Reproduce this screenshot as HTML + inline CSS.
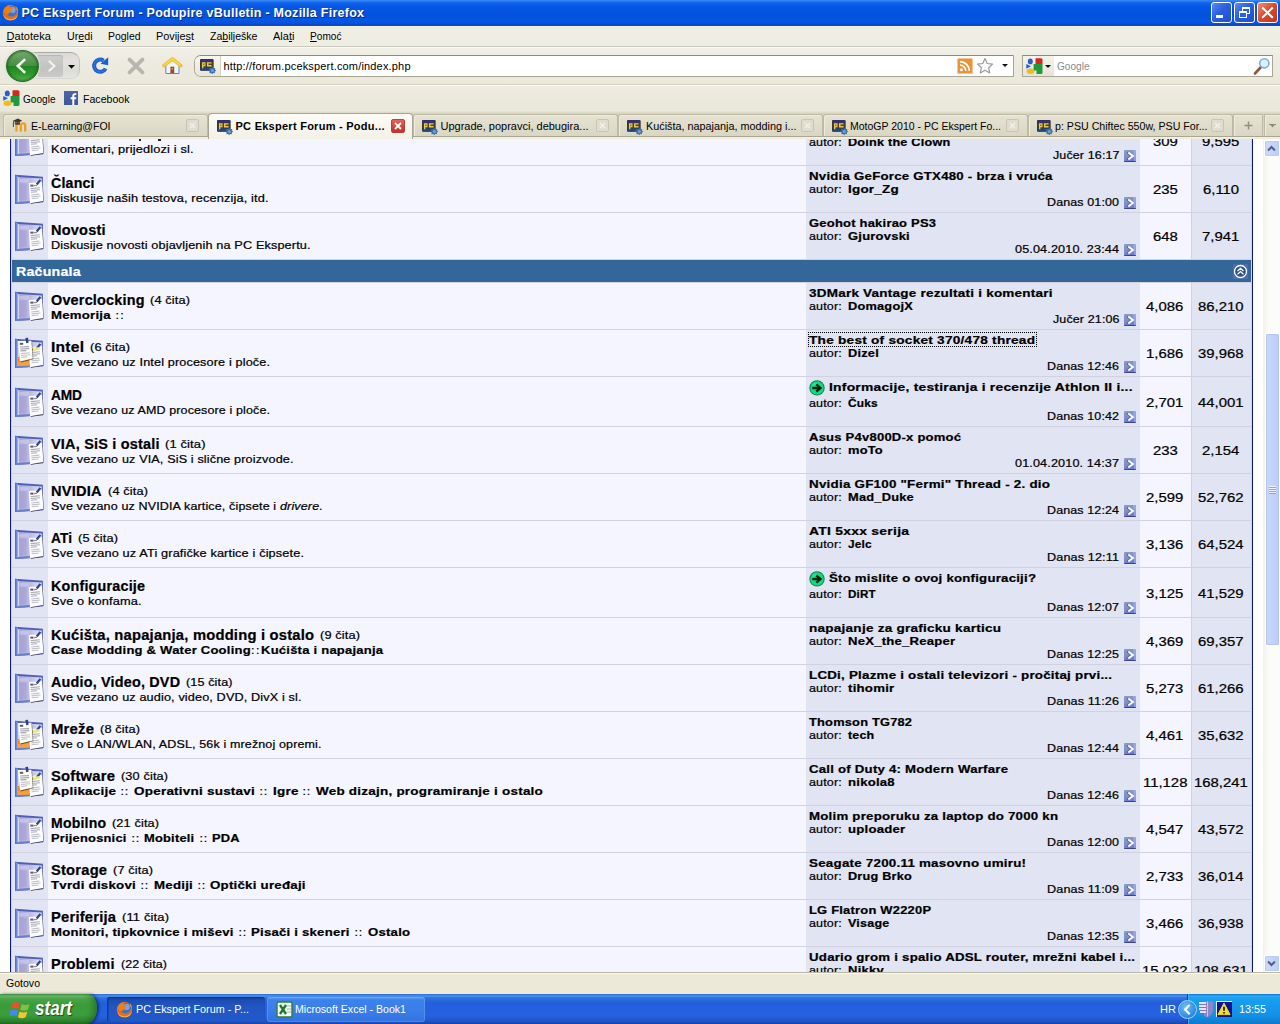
<!DOCTYPE html>
<html><head><meta charset="utf-8"><title>PC Ekspert Forum - Podupire vBulletin - Mozilla Firefox</title>
<style>
html,body{margin:0;padding:0;background:#fff;}
body{width:1280px;height:1024px;overflow:hidden;font-family:"Liberation Sans",sans-serif;}
#scr{position:relative;width:1280px;height:1024px;overflow:hidden;background:#fff;}
#scr div,#scr span,#scr svg{position:absolute;box-sizing:border-box;}
.t{white-space:pre;color:#000;transform-origin:0 0;}
.t b{position:static!important;font-weight:700;}
.t i{position:static!important;}
#vp{left:0;top:139px;width:1263px;height:833px;overflow:hidden;background:#fff;}
#pg{left:0;top:-139px;width:1280px;height:1024px;}
#pg .t{-webkit-text-stroke:0.22px currentColor;}

</style></head>
<body>
<div id="scr">
<div id="vp"><div id="pg">
<div style="left:0;top:139px;width:1263px;height:833px;background:#fff;"></div>
<div id="tb" style="left:10px;top:139px;width:1243px;height:833px;background:#d1d1e1;border-left:1px solid #0b198c;border-right:1px solid #0b198c;"></div>
<svg style="left:0;top:0" width="0" height="0"><defs>
<linearGradient id="gi" x1="0" x2="1" y1="0" y2="0"><stop offset="0" stop-color="#a9a8d8"/><stop offset=".55" stop-color="#bdbee6"/><stop offset="1" stop-color="#dfe2fa"/></linearGradient>
<linearGradient id="gl" x1="0" x2="1" y1="0" y2="0"><stop offset="0" stop-color="#5166c0"/><stop offset=".6" stop-color="#6f8be0"/><stop offset="1" stop-color="#90a8ee"/></linearGradient>
<g id="frame"><path d="M1 .8L28.900 2.800V28.300L1 29.900z" fill="#5060b4"/><path d="M1 .8L4 2V28.700L1 29.900z" fill="url(#gl)"/><path d="M3.900 3.100L27.700 4.500V26.700L3.900 28.100z" fill="url(#gi)"/><path d="M4.300 3.200V28" stroke="#e4e8fb" stroke-width=".9"/><path d="M5.500 5h9.500v3.500H5.500z" fill="#c9cbec" opacity=".7"/><path d="M5.500 9.500h7V26h-7z" fill="#a29fcf" opacity=".55"/><path d="M1 29.900L28.900 28.300V27L3.900 28.100z" fill="#6a7ed0"/></g>
<g id="paper"><path d="M15.600 10.300L28.700 9.200L29.900 27.600L16.800 30z" fill="#20202a" opacity=".75"/><path d="M14.800 8.900L28.200 8.200L29.400 26.900L16 29.200z" fill="#fdfdff"/><path d="M16.300 10.600h3.200v2h-3.200z" fill="#5a5c6c"/><path d="M20 11.600l3-.3" stroke="#8a8c9c" stroke-width="1.200"/><path d="M16.600 14.600l9.200-.8M16.800 16.500l9.200-.8M17 18.300l6-.6" stroke="#a9abb9" stroke-width="1.100"/><path d="M17.300 21l8-.9M17.500 22.900l9-.9M17.700 24.800l7-.8" stroke="#c0c2cc" stroke-width="1.100"/><path d="M21.800 9.800L25.600 5.200l1.600 1.300L23.600 11.300z" fill="#2f3f92"/></g>
<g id="paper2"><path d="M4.600 3.700L18 3.500L19.400 21.200L6.600 24.400z" fill="#30281c" opacity=".6"/><path d="M4 3L17.400 2.800L18.700 20.400L6 23.400z" fill="#fffff4"/><path d="M5.800 4.800h3.400v2H5.800z" fill="#5a5c6c"/><path d="M6 9l9-.4M6.200 11l9-.4M6.400 12.900l6-.3" stroke="#9fa1b4" stroke-width="1.100"/><path d="M6.800 15.600l9-.8M7 17.500l9-.8M7.200 19.400l6-.6" stroke="#c3c0d6" stroke-width="1.100"/><path d="M11.300 0l2.700-.3.600 5-2.400.6z" fill="#2f3f92"/></g>
</defs></svg>
<svg style="left:0;top:0" width="0" height="0"><defs><linearGradient id="ga" x1="0" x2=".35" y1="0" y2="1"><stop offset="0" stop-color="#8c9cba"/><stop offset=".5" stop-color="#8090cc"/><stop offset="1" stop-color="#6b78d4"/></linearGradient>
<g id="la"><rect x="0" y="0" width="12" height="12" rx="1" fill="url(#ga)"/><path d="M9 0h3v11H10z" fill="#a8b8f4" opacity=".55"/><path d="M.3 11.500h11.400" stroke="#3d4488" stroke-width="1"/><path d="M3.300 2.500L7.600 6L3.300 9.500" stroke="#45527e" stroke-width="2.200" fill="none" opacity=".8"/><path d="M4.300 2.500L8.800 6L4.300 9.500" stroke="#fff" stroke-width="2" fill="none"/></g></defs></svg>
<div style="left:12px;top:116px;width:36px;height:49px;background:#e1e4f2;"></div>
<div style="left:48px;top:116px;width:758px;height:49px;background:#f5f5ff;"></div>
<div style="left:806px;top:116px;width:334px;height:49px;background:#e1e4f2;"></div>
<div style="left:1140px;top:116px;width:51px;height:49px;background:#f5f5ff;"></div>
<div style="left:1192px;top:116px;width:59px;height:49px;background:#e1e4f2;"></div>
<svg style="left:14px;top:126px" width="31" height="31" viewBox="0 0 31 31"><use href="#frame"/><use href="#paper"/></svg>
<svg style="left:809px;top:119px" width="16" height="16" viewBox="0 0 16 16"><circle cx="8" cy="7.900" r="7.700" fill="#0c8448"/><circle cx="8" cy="7.900" r="6.700" fill="#17d686"/><circle cx="6.500" cy="6" r="3.500" fill="#22f39c" opacity=".55"/><path d="M3.200 8h8M7.300 4.400L11.400 8l-4.100 3.600" stroke="#04260e" stroke-width="2.400" fill="none"/></svg>
<svg style="left:1124px;top:150px" width="12" height="12" viewBox="0 0 12 12"><use href="#la"/></svg>
<div style="left:12px;top:166px;width:36px;height:46px;background:#e1e4f2;"></div>
<div style="left:48px;top:166px;width:758px;height:46px;background:#f5f5ff;"></div>
<div style="left:806px;top:166px;width:334px;height:46px;background:#e1e4f2;"></div>
<div style="left:1140px;top:166px;width:51px;height:46px;background:#f5f5ff;"></div>
<div style="left:1192px;top:166px;width:59px;height:46px;background:#e1e4f2;"></div>
<svg style="left:14px;top:174px" width="31" height="31" viewBox="0 0 31 31"><use href="#frame"/><use href="#paper"/></svg>
<svg style="left:1124px;top:197px" width="12" height="12" viewBox="0 0 12 12"><use href="#la"/></svg>
<div style="left:12px;top:213px;width:36px;height:46px;background:#e1e4f2;"></div>
<div style="left:48px;top:213px;width:758px;height:46px;background:#f5f5ff;"></div>
<div style="left:806px;top:213px;width:334px;height:46px;background:#e1e4f2;"></div>
<div style="left:1140px;top:213px;width:51px;height:46px;background:#f5f5ff;"></div>
<div style="left:1192px;top:213px;width:59px;height:46px;background:#e1e4f2;"></div>
<svg style="left:14px;top:221px" width="31" height="31" viewBox="0 0 31 31"><use href="#frame"/><use href="#paper"/></svg>
<svg style="left:1124px;top:244px" width="12" height="12" viewBox="0 0 12 12"><use href="#la"/></svg>
<div style="left:12px;top:283px;width:36px;height:46px;background:#e1e4f2;"></div>
<div style="left:48px;top:283px;width:758px;height:46px;background:#f5f5ff;"></div>
<div style="left:806px;top:283px;width:334px;height:46px;background:#e1e4f2;"></div>
<div style="left:1140px;top:283px;width:51px;height:46px;background:#f5f5ff;"></div>
<div style="left:1192px;top:283px;width:59px;height:46px;background:#e1e4f2;"></div>
<svg style="left:14px;top:291px" width="31" height="31" viewBox="0 0 31 31"><use href="#frame"/><use href="#paper"/></svg>
<svg style="left:1124px;top:314px" width="12" height="12" viewBox="0 0 12 12"><use href="#la"/></svg>
<div style="left:12px;top:330px;width:36px;height:46px;background:#e1e4f2;"></div>
<div style="left:48px;top:330px;width:758px;height:46px;background:#f5f5ff;"></div>
<div style="left:806px;top:330px;width:334px;height:46px;background:#e1e4f2;"></div>
<div style="left:1140px;top:330px;width:51px;height:46px;background:#f5f5ff;"></div>
<div style="left:1192px;top:330px;width:59px;height:46px;background:#e1e4f2;"></div>
<svg style="left:14px;top:338px" width="31" height="31" viewBox="0 0 31 31" overflow="visible"><use href="#frame"/><path d="M4 19L15.500 19V27.400L4 28.100z" fill="#f08a22"/><path d="M4 24L15.500 23.500V27.400L4 28.100z" fill="#f5a040"/><use href="#paper"/><path d="M18.200 9.500l8-.6.2 3-8 .8z" fill="#eef07a" opacity=".9"/><use href="#paper2"/></svg>
<svg style="left:1124px;top:361px" width="12" height="12" viewBox="0 0 12 12"><use href="#la"/></svg>
<div style="left:12px;top:377px;width:36px;height:49px;background:#e1e4f2;"></div>
<div style="left:48px;top:377px;width:758px;height:49px;background:#f5f5ff;"></div>
<div style="left:806px;top:377px;width:334px;height:49px;background:#e1e4f2;"></div>
<div style="left:1140px;top:377px;width:51px;height:49px;background:#f5f5ff;"></div>
<div style="left:1192px;top:377px;width:59px;height:49px;background:#e1e4f2;"></div>
<svg style="left:14px;top:387px" width="31" height="31" viewBox="0 0 31 31"><use href="#frame"/><use href="#paper"/></svg>
<svg style="left:809px;top:380px" width="16" height="16" viewBox="0 0 16 16"><circle cx="8" cy="7.900" r="7.700" fill="#0c8448"/><circle cx="8" cy="7.900" r="6.700" fill="#17d686"/><circle cx="6.500" cy="6" r="3.500" fill="#22f39c" opacity=".55"/><path d="M3.200 8h8M7.300 4.400L11.400 8l-4.100 3.600" stroke="#04260e" stroke-width="2.400" fill="none"/></svg>
<svg style="left:1124px;top:411px" width="12" height="12" viewBox="0 0 12 12"><use href="#la"/></svg>
<div style="left:12px;top:427px;width:36px;height:46px;background:#e1e4f2;"></div>
<div style="left:48px;top:427px;width:758px;height:46px;background:#f5f5ff;"></div>
<div style="left:806px;top:427px;width:334px;height:46px;background:#e1e4f2;"></div>
<div style="left:1140px;top:427px;width:51px;height:46px;background:#f5f5ff;"></div>
<div style="left:1192px;top:427px;width:59px;height:46px;background:#e1e4f2;"></div>
<svg style="left:14px;top:435px" width="31" height="31" viewBox="0 0 31 31"><use href="#frame"/><use href="#paper"/></svg>
<svg style="left:1124px;top:458px" width="12" height="12" viewBox="0 0 12 12"><use href="#la"/></svg>
<div style="left:12px;top:474px;width:36px;height:46px;background:#e1e4f2;"></div>
<div style="left:48px;top:474px;width:758px;height:46px;background:#f5f5ff;"></div>
<div style="left:806px;top:474px;width:334px;height:46px;background:#e1e4f2;"></div>
<div style="left:1140px;top:474px;width:51px;height:46px;background:#f5f5ff;"></div>
<div style="left:1192px;top:474px;width:59px;height:46px;background:#e1e4f2;"></div>
<svg style="left:14px;top:482px" width="31" height="31" viewBox="0 0 31 31"><use href="#frame"/><use href="#paper"/></svg>
<svg style="left:1124px;top:505px" width="12" height="12" viewBox="0 0 12 12"><use href="#la"/></svg>
<div style="left:12px;top:521px;width:36px;height:46px;background:#e1e4f2;"></div>
<div style="left:48px;top:521px;width:758px;height:46px;background:#f5f5ff;"></div>
<div style="left:806px;top:521px;width:334px;height:46px;background:#e1e4f2;"></div>
<div style="left:1140px;top:521px;width:51px;height:46px;background:#f5f5ff;"></div>
<div style="left:1192px;top:521px;width:59px;height:46px;background:#e1e4f2;"></div>
<svg style="left:14px;top:529px" width="31" height="31" viewBox="0 0 31 31"><use href="#frame"/><use href="#paper"/></svg>
<svg style="left:1124px;top:552px" width="12" height="12" viewBox="0 0 12 12"><use href="#la"/></svg>
<div style="left:12px;top:568px;width:36px;height:49px;background:#e1e4f2;"></div>
<div style="left:48px;top:568px;width:758px;height:49px;background:#f5f5ff;"></div>
<div style="left:806px;top:568px;width:334px;height:49px;background:#e1e4f2;"></div>
<div style="left:1140px;top:568px;width:51px;height:49px;background:#f5f5ff;"></div>
<div style="left:1192px;top:568px;width:59px;height:49px;background:#e1e4f2;"></div>
<svg style="left:14px;top:578px" width="31" height="31" viewBox="0 0 31 31"><use href="#frame"/><use href="#paper"/></svg>
<svg style="left:809px;top:571px" width="16" height="16" viewBox="0 0 16 16"><circle cx="8" cy="7.900" r="7.700" fill="#0c8448"/><circle cx="8" cy="7.900" r="6.700" fill="#17d686"/><circle cx="6.500" cy="6" r="3.500" fill="#22f39c" opacity=".55"/><path d="M3.200 8h8M7.300 4.400L11.400 8l-4.100 3.600" stroke="#04260e" stroke-width="2.400" fill="none"/></svg>
<svg style="left:1124px;top:602px" width="12" height="12" viewBox="0 0 12 12"><use href="#la"/></svg>
<div style="left:12px;top:618px;width:36px;height:46px;background:#e1e4f2;"></div>
<div style="left:48px;top:618px;width:758px;height:46px;background:#f5f5ff;"></div>
<div style="left:806px;top:618px;width:334px;height:46px;background:#e1e4f2;"></div>
<div style="left:1140px;top:618px;width:51px;height:46px;background:#f5f5ff;"></div>
<div style="left:1192px;top:618px;width:59px;height:46px;background:#e1e4f2;"></div>
<svg style="left:14px;top:626px" width="31" height="31" viewBox="0 0 31 31"><use href="#frame"/><use href="#paper"/></svg>
<svg style="left:1124px;top:649px" width="12" height="12" viewBox="0 0 12 12"><use href="#la"/></svg>
<div style="left:12px;top:665px;width:36px;height:46px;background:#e1e4f2;"></div>
<div style="left:48px;top:665px;width:758px;height:46px;background:#f5f5ff;"></div>
<div style="left:806px;top:665px;width:334px;height:46px;background:#e1e4f2;"></div>
<div style="left:1140px;top:665px;width:51px;height:46px;background:#f5f5ff;"></div>
<div style="left:1192px;top:665px;width:59px;height:46px;background:#e1e4f2;"></div>
<svg style="left:14px;top:673px" width="31" height="31" viewBox="0 0 31 31"><use href="#frame"/><use href="#paper"/></svg>
<svg style="left:1124px;top:696px" width="12" height="12" viewBox="0 0 12 12"><use href="#la"/></svg>
<div style="left:12px;top:712px;width:36px;height:46px;background:#e1e4f2;"></div>
<div style="left:48px;top:712px;width:758px;height:46px;background:#f5f5ff;"></div>
<div style="left:806px;top:712px;width:334px;height:46px;background:#e1e4f2;"></div>
<div style="left:1140px;top:712px;width:51px;height:46px;background:#f5f5ff;"></div>
<div style="left:1192px;top:712px;width:59px;height:46px;background:#e1e4f2;"></div>
<svg style="left:14px;top:720px" width="31" height="31" viewBox="0 0 31 31" overflow="visible"><use href="#frame"/><path d="M4 19L15.500 19V27.400L4 28.100z" fill="#f08a22"/><path d="M4 24L15.500 23.500V27.400L4 28.100z" fill="#f5a040"/><use href="#paper"/><path d="M18.200 9.500l8-.6.2 3-8 .8z" fill="#eef07a" opacity=".9"/><use href="#paper2"/></svg>
<svg style="left:1124px;top:743px" width="12" height="12" viewBox="0 0 12 12"><use href="#la"/></svg>
<div style="left:12px;top:759px;width:36px;height:46px;background:#e1e4f2;"></div>
<div style="left:48px;top:759px;width:758px;height:46px;background:#f5f5ff;"></div>
<div style="left:806px;top:759px;width:334px;height:46px;background:#e1e4f2;"></div>
<div style="left:1140px;top:759px;width:51px;height:46px;background:#f5f5ff;"></div>
<div style="left:1192px;top:759px;width:59px;height:46px;background:#e1e4f2;"></div>
<svg style="left:14px;top:767px" width="31" height="31" viewBox="0 0 31 31" overflow="visible"><use href="#frame"/><path d="M4 19L15.500 19V27.400L4 28.100z" fill="#f08a22"/><path d="M4 24L15.500 23.500V27.400L4 28.100z" fill="#f5a040"/><use href="#paper"/><path d="M18.200 9.500l8-.6.2 3-8 .8z" fill="#eef07a" opacity=".9"/><use href="#paper2"/></svg>
<svg style="left:1124px;top:790px" width="12" height="12" viewBox="0 0 12 12"><use href="#la"/></svg>
<div style="left:12px;top:806px;width:36px;height:46px;background:#e1e4f2;"></div>
<div style="left:48px;top:806px;width:758px;height:46px;background:#f5f5ff;"></div>
<div style="left:806px;top:806px;width:334px;height:46px;background:#e1e4f2;"></div>
<div style="left:1140px;top:806px;width:51px;height:46px;background:#f5f5ff;"></div>
<div style="left:1192px;top:806px;width:59px;height:46px;background:#e1e4f2;"></div>
<svg style="left:14px;top:814px" width="31" height="31" viewBox="0 0 31 31"><use href="#frame"/><use href="#paper"/></svg>
<svg style="left:1124px;top:837px" width="12" height="12" viewBox="0 0 12 12"><use href="#la"/></svg>
<div style="left:12px;top:853px;width:36px;height:46px;background:#e1e4f2;"></div>
<div style="left:48px;top:853px;width:758px;height:46px;background:#f5f5ff;"></div>
<div style="left:806px;top:853px;width:334px;height:46px;background:#e1e4f2;"></div>
<div style="left:1140px;top:853px;width:51px;height:46px;background:#f5f5ff;"></div>
<div style="left:1192px;top:853px;width:59px;height:46px;background:#e1e4f2;"></div>
<svg style="left:14px;top:861px" width="31" height="31" viewBox="0 0 31 31"><use href="#frame"/><use href="#paper"/></svg>
<svg style="left:1124px;top:884px" width="12" height="12" viewBox="0 0 12 12"><use href="#la"/></svg>
<div style="left:12px;top:900px;width:36px;height:46px;background:#e1e4f2;"></div>
<div style="left:48px;top:900px;width:758px;height:46px;background:#f5f5ff;"></div>
<div style="left:806px;top:900px;width:334px;height:46px;background:#e1e4f2;"></div>
<div style="left:1140px;top:900px;width:51px;height:46px;background:#f5f5ff;"></div>
<div style="left:1192px;top:900px;width:59px;height:46px;background:#e1e4f2;"></div>
<svg style="left:14px;top:908px" width="31" height="31" viewBox="0 0 31 31"><use href="#frame"/><use href="#paper"/></svg>
<svg style="left:1124px;top:931px" width="12" height="12" viewBox="0 0 12 12"><use href="#la"/></svg>
<div style="left:12px;top:947px;width:36px;height:46px;background:#e1e4f2;"></div>
<div style="left:48px;top:947px;width:758px;height:46px;background:#f5f5ff;"></div>
<div style="left:806px;top:947px;width:334px;height:46px;background:#e1e4f2;"></div>
<div style="left:1140px;top:947px;width:51px;height:46px;background:#f5f5ff;"></div>
<div style="left:1192px;top:947px;width:59px;height:46px;background:#e1e4f2;"></div>
<svg style="left:14px;top:955px" width="31" height="31" viewBox="0 0 31 31"><use href="#frame"/><use href="#paper"/></svg>
<svg style="left:1124px;top:978px" width="12" height="12" viewBox="0 0 12 12"><use href="#la"/></svg>
<div style="left:12px;top:260px;width:1239px;height:22px;background:#336699;"></div>
<svg style="left:1233px;top:264px" width="15" height="15" viewBox="0 0 15 15"><rect width="15" height="15" fill="#4b6fa8"/><circle cx="7.500" cy="7.500" r="6" fill="#2d4f86" stroke="#fff" stroke-width="1.300"/><path d="M4.500 7l3-2.700 3 2.700M4.500 10.300l3-2.700 3 2.700" stroke="#fff" stroke-width="1.300" fill="none"/></svg>
<div style="left:808px;top:332px;width:229px;height:15px;border:1px dotted #000;"></div>
<div style="left:139px;top:139px;width:2px;height:2px;background:#222;"></div>
<div style="left:158px;top:139px;width:3px;height:2px;background:#222;"></div>
<span class="t" style="left:51.00px;top:141.67px;font-size:11.5px;line-height:15.5px;letter-spacing:0.12px;transform:scaleX(1.1154);">Komentari, prijedlozi i sl.</span>
<span class="t" style="left:809.30px;top:134.87px;font-size:11.5px;line-height:15.5px;letter-spacing:0.12px;transform:scaleX(1.0892);">autor:</span>
<span class="t" style="left:848.30px;top:134.87px;font-size:11.5px;line-height:15.5px;letter-spacing:0.2px;transform:scaleX(1.1002);font-weight:700;">Doink the Clown</span>
<span class="t" style="left:1052.50px;top:148.07px;font-size:11.5px;line-height:15.5px;letter-spacing:0.12px;transform:scaleX(1.0847);">Jučer 16:17</span>
<span class="t" style="left:1152.57px;top:132.50px;font-size:13px;line-height:17px;letter-spacing:0px;transform:scaleX(1.145);">309</span>
<span class="t" style="left:1202.37px;top:132.50px;font-size:13px;line-height:17px;letter-spacing:0px;transform:scaleX(1.145);">9,595</span>
<span class="t" style="left:51.00px;top:173.75px;font-size:14px;line-height:18px;letter-spacing:0.2px;transform:scaleX(1.0113);font-weight:700;">Članci</span>
<span class="t" style="left:51.00px;top:190.67px;font-size:11.5px;line-height:15.5px;letter-spacing:0.12px;transform:scaleX(1.1108);">Diskusije naših testova, recenzija, itd.</span>
<span class="t" style="left:809.00px;top:168.57px;font-size:11.5px;line-height:15.5px;letter-spacing:0.2px;transform:scaleX(1.1511);font-weight:700;">Nvidia GeForce GTX480 - brza i vruća</span>
<span class="t" style="left:809.30px;top:181.77px;font-size:11.5px;line-height:15.5px;letter-spacing:0.12px;transform:scaleX(1.0892);">autor:</span>
<span class="t" style="left:848.30px;top:181.77px;font-size:11.5px;line-height:15.5px;letter-spacing:0.2px;transform:scaleX(1.169);font-weight:700;">Igor_Zg</span>
<span class="t" style="left:1047.00px;top:195.07px;font-size:11.5px;line-height:15.5px;letter-spacing:0.12px;transform:scaleX(1.084);">Danas 01:00</span>
<span class="t" style="left:1152.57px;top:181.00px;font-size:13px;line-height:17px;letter-spacing:0px;transform:scaleX(1.145);">235</span>
<span class="t" style="left:1202.92px;top:181.00px;font-size:13px;line-height:17px;letter-spacing:0px;transform:scaleX(1.145);">6,110</span>
<span class="t" style="left:51.00px;top:220.75px;font-size:14px;line-height:18px;letter-spacing:0.2px;transform:scaleX(1.0372);font-weight:700;">Novosti</span>
<span class="t" style="left:51.00px;top:237.67px;font-size:11.5px;line-height:15.5px;letter-spacing:0.12px;transform:scaleX(1.1024);">Diskusije novosti objavljenih na PC Ekspertu.</span>
<span class="t" style="left:809.00px;top:215.57px;font-size:11.5px;line-height:15.5px;letter-spacing:0.2px;transform:scaleX(1.1271);font-weight:700;">Geohot hakirao PS3</span>
<span class="t" style="left:809.30px;top:228.77px;font-size:11.5px;line-height:15.5px;letter-spacing:0.12px;transform:scaleX(1.0892);">autor:</span>
<span class="t" style="left:848.30px;top:228.77px;font-size:11.5px;line-height:15.5px;letter-spacing:0.2px;transform:scaleX(1.1287);font-weight:700;">Gjurovski</span>
<span class="t" style="left:1015.00px;top:242.07px;font-size:11.5px;line-height:15.5px;letter-spacing:0.12px;transform:scaleX(1.0987);">05.04.2010. 23:44</span>
<span class="t" style="left:1152.57px;top:228.00px;font-size:13px;line-height:17px;letter-spacing:0px;transform:scaleX(1.145);">648</span>
<span class="t" style="left:1202.37px;top:228.00px;font-size:13px;line-height:17px;letter-spacing:0px;transform:scaleX(1.145);">7,941</span>
<span class="t" style="left:51.00px;top:290.75px;font-size:14px;line-height:18px;letter-spacing:0.2px;transform:scaleX(1.0286);font-weight:700;">Overclocking</span>
<span class="t" style="left:150.00px;top:292.87px;font-size:11.5px;line-height:15.5px;letter-spacing:0.12px;transform:scaleX(1.1112);">(4 čita)</span>
<span class="t" style="left:51.00px;top:307.67px;font-size:11.5px;line-height:15.5px;letter-spacing:0.2px;transform:scaleX(1.1488);font-weight:700;">Memorija</span>
<span class="t" style="left:110.85px;top:307.67px;font-size:11.5px;line-height:15.5px;letter-spacing:1.044px;transform:scaleX(1.09);"> ::</span>
<span class="t" style="left:809.00px;top:285.57px;font-size:11.5px;line-height:15.5px;letter-spacing:0.2px;transform:scaleX(1.1724);font-weight:700;">3DMark Vantage rezultati i komentari</span>
<span class="t" style="left:809.30px;top:298.77px;font-size:11.5px;line-height:15.5px;letter-spacing:0.12px;transform:scaleX(1.0892);">autor:</span>
<span class="t" style="left:848.30px;top:298.77px;font-size:11.5px;line-height:15.5px;letter-spacing:0.2px;transform:scaleX(1.1103);font-weight:700;">DomagojX</span>
<span class="t" style="left:1052.50px;top:312.07px;font-size:11.5px;line-height:15.5px;letter-spacing:0.12px;transform:scaleX(1.0847);">Jučer 21:06</span>
<span class="t" style="left:1146.37px;top:298.00px;font-size:13px;line-height:17px;letter-spacing:0px;transform:scaleX(1.145);">4,086</span>
<span class="t" style="left:1198.23px;top:298.00px;font-size:13px;line-height:17px;letter-spacing:0px;transform:scaleX(1.145);">86,210</span>
<span class="t" style="left:51.00px;top:337.75px;font-size:14px;line-height:18px;letter-spacing:0.2px;transform:scaleX(1.1156);font-weight:700;">Intel</span>
<span class="t" style="left:90.00px;top:339.87px;font-size:11.5px;line-height:15.5px;letter-spacing:0.12px;transform:scaleX(1.1112);">(6 čita)</span>
<span class="t" style="left:51.00px;top:354.67px;font-size:11.5px;line-height:15.5px;letter-spacing:0.12px;transform:scaleX(1.1017);">Sve vezano uz Intel procesore i ploče.</span>
<span class="t" style="left:809.00px;top:332.57px;font-size:11.5px;line-height:15.5px;letter-spacing:0.2px;transform:scaleX(1.1865);font-weight:700;">The best of socket 370/478 thread</span>
<span class="t" style="left:809.30px;top:345.77px;font-size:11.5px;line-height:15.5px;letter-spacing:0.12px;transform:scaleX(1.0892);">autor:</span>
<span class="t" style="left:848.30px;top:345.77px;font-size:11.5px;line-height:15.5px;letter-spacing:0.2px;transform:scaleX(1.1106);font-weight:700;">Dizel</span>
<span class="t" style="left:1047.00px;top:359.07px;font-size:11.5px;line-height:15.5px;letter-spacing:0.12px;transform:scaleX(1.084);">Danas 12:46</span>
<span class="t" style="left:1146.37px;top:345.00px;font-size:13px;line-height:17px;letter-spacing:0px;transform:scaleX(1.145);">1,686</span>
<span class="t" style="left:1198.23px;top:345.00px;font-size:13px;line-height:17px;letter-spacing:0px;transform:scaleX(1.145);">39,968</span>
<span class="t" style="left:51.00px;top:385.75px;font-size:14px;line-height:18px;letter-spacing:-0.129px;transform:scaleX(0.98);font-weight:700;">AMD</span>
<span class="t" style="left:51.00px;top:402.67px;font-size:11.5px;line-height:15.5px;letter-spacing:0.12px;transform:scaleX(1.0856);">Sve vezano uz AMD procesore i ploče.</span>
<span class="t" style="left:829.00px;top:379.57px;font-size:11.5px;line-height:15.5px;letter-spacing:0.2px;transform:scaleX(1.2033);font-weight:700;">Informacije, testiranja i recenzije Athlon II i...</span>
<span class="t" style="left:809.30px;top:395.87px;font-size:11.5px;line-height:15.5px;letter-spacing:0.12px;transform:scaleX(1.0892);">autor:</span>
<span class="t" style="left:848.30px;top:395.87px;font-size:11.5px;line-height:15.5px;letter-spacing:0.2px;transform:scaleX(1.0339);font-weight:700;">Čuks</span>
<span class="t" style="left:1047.00px;top:409.07px;font-size:11.5px;line-height:15.5px;letter-spacing:0.12px;transform:scaleX(1.084);">Danas 10:42</span>
<span class="t" style="left:1146.37px;top:393.50px;font-size:13px;line-height:17px;letter-spacing:0px;transform:scaleX(1.145);">2,701</span>
<span class="t" style="left:1198.23px;top:393.50px;font-size:13px;line-height:17px;letter-spacing:0px;transform:scaleX(1.145);">44,001</span>
<span class="t" style="left:51.00px;top:434.75px;font-size:14px;line-height:18px;letter-spacing:0.2px;transform:scaleX(1.0321);font-weight:700;">VIA, SiS i ostali</span>
<span class="t" style="left:164.50px;top:436.87px;font-size:11.5px;line-height:15.5px;letter-spacing:0.12px;transform:scaleX(1.1251);">(1 čita)</span>
<span class="t" style="left:51.00px;top:451.67px;font-size:11.5px;line-height:15.5px;letter-spacing:0.12px;transform:scaleX(1.0974);">Sve vezano uz VIA, SiS i slične proizvode.</span>
<span class="t" style="left:809.00px;top:429.57px;font-size:11.5px;line-height:15.5px;letter-spacing:0.2px;transform:scaleX(1.1327);font-weight:700;">Asus P4v800D-x pomoć</span>
<span class="t" style="left:809.30px;top:442.77px;font-size:11.5px;line-height:15.5px;letter-spacing:0.12px;transform:scaleX(1.0892);">autor:</span>
<span class="t" style="left:848.30px;top:442.77px;font-size:11.5px;line-height:15.5px;letter-spacing:0.2px;transform:scaleX(1.1174);font-weight:700;">moTo</span>
<span class="t" style="left:1015.00px;top:456.07px;font-size:11.5px;line-height:15.5px;letter-spacing:0.12px;transform:scaleX(1.0987);">01.04.2010. 14:37</span>
<span class="t" style="left:1152.57px;top:442.00px;font-size:13px;line-height:17px;letter-spacing:0px;transform:scaleX(1.145);">233</span>
<span class="t" style="left:1202.37px;top:442.00px;font-size:13px;line-height:17px;letter-spacing:0px;transform:scaleX(1.145);">2,154</span>
<span class="t" style="left:51.00px;top:481.75px;font-size:14px;line-height:18px;letter-spacing:0.2px;transform:scaleX(1.0422);font-weight:700;">NVIDIA</span>
<span class="t" style="left:108.00px;top:483.87px;font-size:11.5px;line-height:15.5px;letter-spacing:0.12px;transform:scaleX(1.1112);">(4 čita)</span>
<span class="t" style="left:51.00px;top:498.67px;font-size:11.5px;line-height:15.5px;letter-spacing:0.12px;transform:scaleX(1.09);">Sve vezano uz NVIDIA kartice, čipsete i </span>
<span class="t" style="left:279.89px;top:498.67px;font-size:11.5px;line-height:15.5px;letter-spacing:0.12px;transform:scaleX(1.09);font-style:italic;">drivere</span>
<span class="t" style="left:319.12px;top:498.67px;font-size:11.5px;line-height:15.5px;letter-spacing:0.12px;transform:scaleX(1.09);">.</span>
<span class="t" style="left:809.00px;top:476.57px;font-size:11.5px;line-height:15.5px;letter-spacing:0.2px;transform:scaleX(1.1638);font-weight:700;">Nvidia GF100 &quot;Fermi&quot; Thread - 2. dio</span>
<span class="t" style="left:809.30px;top:489.77px;font-size:11.5px;line-height:15.5px;letter-spacing:0.12px;transform:scaleX(1.0892);">autor:</span>
<span class="t" style="left:848.30px;top:489.77px;font-size:11.5px;line-height:15.5px;letter-spacing:0.2px;transform:scaleX(1.1149);font-weight:700;">Mad_Duke</span>
<span class="t" style="left:1047.00px;top:503.07px;font-size:11.5px;line-height:15.5px;letter-spacing:0.12px;transform:scaleX(1.084);">Danas 12:24</span>
<span class="t" style="left:1146.37px;top:489.00px;font-size:13px;line-height:17px;letter-spacing:0px;transform:scaleX(1.145);">2,599</span>
<span class="t" style="left:1198.23px;top:489.00px;font-size:13px;line-height:17px;letter-spacing:0px;transform:scaleX(1.145);">52,762</span>
<span class="t" style="left:51.00px;top:528.75px;font-size:14px;line-height:18px;letter-spacing:0.081px;transform:scaleX(0.98);font-weight:700;">ATi</span>
<span class="t" style="left:78.00px;top:530.87px;font-size:11.5px;line-height:15.5px;letter-spacing:0.12px;transform:scaleX(1.1112);">(5 čita)</span>
<span class="t" style="left:51.00px;top:545.67px;font-size:11.5px;line-height:15.5px;letter-spacing:0.12px;transform:scaleX(1.1079);">Sve vezano uz ATi grafičke kartice i čipsete.</span>
<span class="t" style="left:809.00px;top:523.57px;font-size:11.5px;line-height:15.5px;letter-spacing:0.2px;transform:scaleX(1.2121);font-weight:700;">ATI 5xxx serija</span>
<span class="t" style="left:809.30px;top:536.77px;font-size:11.5px;line-height:15.5px;letter-spacing:0.12px;transform:scaleX(1.0892);">autor:</span>
<span class="t" style="left:848.30px;top:536.77px;font-size:11.5px;line-height:15.5px;letter-spacing:0.2px;transform:scaleX(1.0309);font-weight:700;">Jelc</span>
<span class="t" style="left:1047.00px;top:550.07px;font-size:11.5px;line-height:15.5px;letter-spacing:0.12px;transform:scaleX(1.098);">Danas 12:11</span>
<span class="t" style="left:1146.37px;top:536.00px;font-size:13px;line-height:17px;letter-spacing:0px;transform:scaleX(1.145);">3,136</span>
<span class="t" style="left:1198.23px;top:536.00px;font-size:13px;line-height:17px;letter-spacing:0px;transform:scaleX(1.145);">64,524</span>
<span class="t" style="left:51.00px;top:576.75px;font-size:14px;line-height:18px;letter-spacing:0.2px;transform:scaleX(1.0232);font-weight:700;">Konfiguracije</span>
<span class="t" style="left:51.00px;top:593.67px;font-size:11.5px;line-height:15.5px;letter-spacing:0.12px;transform:scaleX(1.1109);">Sve o konfama.</span>
<span class="t" style="left:829.00px;top:570.57px;font-size:11.5px;line-height:15.5px;letter-spacing:0.2px;transform:scaleX(1.1486);font-weight:700;">Što mislite o ovoj konfiguraciji?</span>
<span class="t" style="left:809.30px;top:586.87px;font-size:11.5px;line-height:15.5px;letter-spacing:0.12px;transform:scaleX(1.0892);">autor:</span>
<span class="t" style="left:848.30px;top:586.87px;font-size:11.5px;line-height:15.5px;letter-spacing:0.2px;transform:scaleX(1.0093);font-weight:700;">DiRT</span>
<span class="t" style="left:1047.00px;top:600.07px;font-size:11.5px;line-height:15.5px;letter-spacing:0.12px;transform:scaleX(1.084);">Danas 12:07</span>
<span class="t" style="left:1146.37px;top:584.50px;font-size:13px;line-height:17px;letter-spacing:0px;transform:scaleX(1.145);">3,125</span>
<span class="t" style="left:1198.23px;top:584.50px;font-size:13px;line-height:17px;letter-spacing:0px;transform:scaleX(1.145);">41,529</span>
<span class="t" style="left:51.00px;top:625.75px;font-size:14px;line-height:18px;letter-spacing:0.2px;transform:scaleX(1.0533);font-weight:700;">Kućišta, napajanja, modding i ostalo</span>
<span class="t" style="left:320.00px;top:627.87px;font-size:11.5px;line-height:15.5px;letter-spacing:0.12px;transform:scaleX(1.1112);">(9 čita)</span>
<span class="t" style="left:51.00px;top:642.67px;font-size:11.5px;line-height:15.5px;letter-spacing:0.2px;transform:scaleX(1.133);font-weight:700;">Case Modding &amp; Water Cooling</span>
<span class="t" style="left:250.87px;top:642.67px;font-size:11.5px;line-height:15.5px;letter-spacing:1.392px;transform:scaleX(1.09);">::</span>
<span class="t" style="left:260.87px;top:642.67px;font-size:11.5px;line-height:15.5px;letter-spacing:0.2px;transform:scaleX(1.133);font-weight:700;">Kućišta i napajanja</span>
<span class="t" style="left:809.00px;top:620.57px;font-size:11.5px;line-height:15.5px;letter-spacing:0.2px;transform:scaleX(1.1791);font-weight:700;">napajanje za graficku karticu</span>
<span class="t" style="left:809.30px;top:633.77px;font-size:11.5px;line-height:15.5px;letter-spacing:0.12px;transform:scaleX(1.0892);">autor:</span>
<span class="t" style="left:848.30px;top:633.77px;font-size:11.5px;line-height:15.5px;letter-spacing:0.2px;transform:scaleX(1.1403);font-weight:700;">NeX_the_Reaper</span>
<span class="t" style="left:1047.00px;top:647.07px;font-size:11.5px;line-height:15.5px;letter-spacing:0.12px;transform:scaleX(1.084);">Danas 12:25</span>
<span class="t" style="left:1146.37px;top:633.00px;font-size:13px;line-height:17px;letter-spacing:0px;transform:scaleX(1.145);">4,369</span>
<span class="t" style="left:1198.23px;top:633.00px;font-size:13px;line-height:17px;letter-spacing:0px;transform:scaleX(1.145);">69,357</span>
<span class="t" style="left:51.00px;top:672.75px;font-size:14px;line-height:18px;letter-spacing:0.2px;transform:scaleX(1.0251);font-weight:700;">Audio, Video, DVD</span>
<span class="t" style="left:186.00px;top:674.87px;font-size:11.5px;line-height:15.5px;letter-spacing:0.12px;transform:scaleX(1.0939);">(15 čita)</span>
<span class="t" style="left:51.00px;top:689.67px;font-size:11.5px;line-height:15.5px;letter-spacing:0.12px;transform:scaleX(1.1012);">Sve vezano uz audio, video, DVD, DivX i sl.</span>
<span class="t" style="left:809.00px;top:667.57px;font-size:11.5px;line-height:15.5px;letter-spacing:0.2px;transform:scaleX(1.1602);font-weight:700;">LCDi, Plazme i ostali televizori - pročitaj prvi...</span>
<span class="t" style="left:809.30px;top:680.77px;font-size:11.5px;line-height:15.5px;letter-spacing:0.12px;transform:scaleX(1.0892);">autor:</span>
<span class="t" style="left:848.30px;top:680.77px;font-size:11.5px;line-height:15.5px;letter-spacing:0.2px;transform:scaleX(1.1497);font-weight:700;">tihomir</span>
<span class="t" style="left:1047.00px;top:694.07px;font-size:11.5px;line-height:15.5px;letter-spacing:0.12px;transform:scaleX(1.098);">Danas 11:26</span>
<span class="t" style="left:1146.37px;top:680.00px;font-size:13px;line-height:17px;letter-spacing:0px;transform:scaleX(1.145);">5,273</span>
<span class="t" style="left:1198.23px;top:680.00px;font-size:13px;line-height:17px;letter-spacing:0px;transform:scaleX(1.145);">61,266</span>
<span class="t" style="left:51.00px;top:719.75px;font-size:14px;line-height:18px;letter-spacing:0.2px;transform:scaleX(1.0621);font-weight:700;">Mreže</span>
<span class="t" style="left:100.00px;top:721.87px;font-size:11.5px;line-height:15.5px;letter-spacing:0.12px;transform:scaleX(1.1112);">(8 čita)</span>
<span class="t" style="left:51.00px;top:736.67px;font-size:11.5px;line-height:15.5px;letter-spacing:0.12px;transform:scaleX(1.0883);">Sve o LAN/WLAN, ADSL, 56k i mrežnoj opremi.</span>
<span class="t" style="left:809.00px;top:714.57px;font-size:11.5px;line-height:15.5px;letter-spacing:0.2px;transform:scaleX(1.1134);font-weight:700;">Thomson TG782</span>
<span class="t" style="left:809.30px;top:727.77px;font-size:11.5px;line-height:15.5px;letter-spacing:0.12px;transform:scaleX(1.0892);">autor:</span>
<span class="t" style="left:848.30px;top:727.77px;font-size:11.5px;line-height:15.5px;letter-spacing:0.2px;transform:scaleX(1.0801);font-weight:700;">tech</span>
<span class="t" style="left:1047.00px;top:741.07px;font-size:11.5px;line-height:15.5px;letter-spacing:0.12px;transform:scaleX(1.084);">Danas 12:44</span>
<span class="t" style="left:1146.37px;top:727.00px;font-size:13px;line-height:17px;letter-spacing:0px;transform:scaleX(1.145);">4,461</span>
<span class="t" style="left:1198.23px;top:727.00px;font-size:13px;line-height:17px;letter-spacing:0px;transform:scaleX(1.145);">35,632</span>
<span class="t" style="left:51.00px;top:766.75px;font-size:14px;line-height:18px;letter-spacing:0.2px;transform:scaleX(1.0574);font-weight:700;">Software</span>
<span class="t" style="left:121.00px;top:768.87px;font-size:11.5px;line-height:15.5px;letter-spacing:0.12px;transform:scaleX(1.1057);">(30 čita)</span>
<span class="t" style="left:51.00px;top:783.67px;font-size:11.5px;line-height:15.5px;letter-spacing:0.2px;transform:scaleX(1.1715);font-weight:700;">Aplikacije</span>
<span class="t" style="left:116.26px;top:783.67px;font-size:11.5px;line-height:15.5px;letter-spacing:0.873px;transform:scaleX(1.09);"> :: </span>
<span class="t" style="left:134.00px;top:783.67px;font-size:11.5px;line-height:15.5px;letter-spacing:0.2px;transform:scaleX(1.1715);font-weight:700;">Operativni sustavi</span>
<span class="t" style="left:255.04px;top:783.67px;font-size:11.5px;line-height:15.5px;letter-spacing:0.873px;transform:scaleX(1.09);"> :: </span>
<span class="t" style="left:272.78px;top:783.67px;font-size:11.5px;line-height:15.5px;letter-spacing:0.2px;transform:scaleX(1.1715);font-weight:700;">Igre</span>
<span class="t" style="left:298.42px;top:783.67px;font-size:11.5px;line-height:15.5px;letter-spacing:0.873px;transform:scaleX(1.09);"> :: </span>
<span class="t" style="left:316.16px;top:783.67px;font-size:11.5px;line-height:15.5px;letter-spacing:0.2px;transform:scaleX(1.1715);font-weight:700;">Web dizajn, programiranje i ostalo</span>
<span class="t" style="left:809.00px;top:761.57px;font-size:11.5px;line-height:15.5px;letter-spacing:0.2px;transform:scaleX(1.1475);font-weight:700;">Call of Duty 4: Modern Warfare</span>
<span class="t" style="left:809.30px;top:774.77px;font-size:11.5px;line-height:15.5px;letter-spacing:0.12px;transform:scaleX(1.0892);">autor:</span>
<span class="t" style="left:848.30px;top:774.77px;font-size:11.5px;line-height:15.5px;letter-spacing:0.2px;transform:scaleX(1.1435);font-weight:700;">nikola8</span>
<span class="t" style="left:1047.00px;top:788.07px;font-size:11.5px;line-height:15.5px;letter-spacing:0.12px;transform:scaleX(1.084);">Danas 12:46</span>
<span class="t" style="left:1142.79px;top:774.00px;font-size:13px;line-height:17px;letter-spacing:0px;transform:scaleX(1.145);">11,128</span>
<span class="t" style="left:1194.09px;top:774.00px;font-size:13px;line-height:17px;letter-spacing:0px;transform:scaleX(1.145);">168,241</span>
<span class="t" style="left:51.00px;top:813.75px;font-size:14px;line-height:18px;letter-spacing:0.2px;transform:scaleX(1.0026);font-weight:700;">Mobilno</span>
<span class="t" style="left:112.00px;top:815.87px;font-size:11.5px;line-height:15.5px;letter-spacing:0.12px;transform:scaleX(1.1057);">(21 čita)</span>
<span class="t" style="left:51.00px;top:830.67px;font-size:11.5px;line-height:15.5px;letter-spacing:0.2px;transform:scaleX(1.1179);font-weight:700;">Prijenosnici</span>
<span class="t" style="left:126.56px;top:830.67px;font-size:11.5px;line-height:15.5px;letter-spacing:0.873px;transform:scaleX(1.09);"> :: </span>
<span class="t" style="left:144.30px;top:830.67px;font-size:11.5px;line-height:15.5px;letter-spacing:0.2px;transform:scaleX(1.1179);font-weight:700;">Mobiteli</span>
<span class="t" style="left:194.66px;top:830.67px;font-size:11.5px;line-height:15.5px;letter-spacing:0.873px;transform:scaleX(1.09);"> :: </span>
<span class="t" style="left:212.40px;top:830.67px;font-size:11.5px;line-height:15.5px;letter-spacing:0.2px;transform:scaleX(1.1179);font-weight:700;">PDA</span>
<span class="t" style="left:809.00px;top:808.57px;font-size:11.5px;line-height:15.5px;letter-spacing:0.2px;transform:scaleX(1.153);font-weight:700;">Molim preporuku za laptop do 7000 kn</span>
<span class="t" style="left:809.30px;top:821.77px;font-size:11.5px;line-height:15.5px;letter-spacing:0.12px;transform:scaleX(1.0892);">autor:</span>
<span class="t" style="left:848.30px;top:821.77px;font-size:11.5px;line-height:15.5px;letter-spacing:0.2px;transform:scaleX(1.1449);font-weight:700;">uploader</span>
<span class="t" style="left:1047.00px;top:835.07px;font-size:11.5px;line-height:15.5px;letter-spacing:0.12px;transform:scaleX(1.084);">Danas 12:00</span>
<span class="t" style="left:1146.37px;top:821.00px;font-size:13px;line-height:17px;letter-spacing:0px;transform:scaleX(1.145);">4,547</span>
<span class="t" style="left:1198.23px;top:821.00px;font-size:13px;line-height:17px;letter-spacing:0px;transform:scaleX(1.145);">43,572</span>
<span class="t" style="left:51.00px;top:860.75px;font-size:14px;line-height:18px;letter-spacing:0.2px;transform:scaleX(1.0502);font-weight:700;">Storage</span>
<span class="t" style="left:113.00px;top:862.87px;font-size:11.5px;line-height:15.5px;letter-spacing:0.12px;transform:scaleX(1.1112);">(7 čita)</span>
<span class="t" style="left:51.00px;top:877.67px;font-size:11.5px;line-height:15.5px;letter-spacing:0.2px;transform:scaleX(1.1552);font-weight:700;">Tvrdi diskovi</span>
<span class="t" style="left:135.95px;top:877.67px;font-size:11.5px;line-height:15.5px;letter-spacing:0.873px;transform:scaleX(1.09);"> :: </span>
<span class="t" style="left:153.69px;top:877.67px;font-size:11.5px;line-height:15.5px;letter-spacing:0.2px;transform:scaleX(1.1552);font-weight:700;">Mediji</span>
<span class="t" style="left:192.73px;top:877.67px;font-size:11.5px;line-height:15.5px;letter-spacing:0.873px;transform:scaleX(1.09);"> :: </span>
<span class="t" style="left:210.47px;top:877.67px;font-size:11.5px;line-height:15.5px;letter-spacing:0.2px;transform:scaleX(1.1552);font-weight:700;">Optički uređaji</span>
<span class="t" style="left:809.00px;top:855.57px;font-size:11.5px;line-height:15.5px;letter-spacing:0.2px;transform:scaleX(1.1624);font-weight:700;">Seagate 7200.11 masovno umiru!</span>
<span class="t" style="left:809.30px;top:868.77px;font-size:11.5px;line-height:15.5px;letter-spacing:0.12px;transform:scaleX(1.0892);">autor:</span>
<span class="t" style="left:848.30px;top:868.77px;font-size:11.5px;line-height:15.5px;letter-spacing:0.2px;transform:scaleX(1.1014);font-weight:700;">Drug Brko</span>
<span class="t" style="left:1047.00px;top:882.07px;font-size:11.5px;line-height:15.5px;letter-spacing:0.12px;transform:scaleX(1.098);">Danas 11:09</span>
<span class="t" style="left:1146.37px;top:868.00px;font-size:13px;line-height:17px;letter-spacing:0px;transform:scaleX(1.145);">2,733</span>
<span class="t" style="left:1198.23px;top:868.00px;font-size:13px;line-height:17px;letter-spacing:0px;transform:scaleX(1.145);">36,014</span>
<span class="t" style="left:51.00px;top:907.75px;font-size:14px;line-height:18px;letter-spacing:0.2px;transform:scaleX(1.0528);font-weight:700;">Periferija</span>
<span class="t" style="left:122.00px;top:909.87px;font-size:11.5px;line-height:15.5px;letter-spacing:0.12px;transform:scaleX(1.1281);">(11 čita)</span>
<span class="t" style="left:51.00px;top:924.67px;font-size:11.5px;line-height:15.5px;letter-spacing:0.2px;transform:scaleX(1.1434);font-weight:700;">Monitori, tipkovnice i miševi</span>
<span class="t" style="left:233.73px;top:924.67px;font-size:11.5px;line-height:15.5px;letter-spacing:0.873px;transform:scaleX(1.09);"> :: </span>
<span class="t" style="left:251.47px;top:924.67px;font-size:11.5px;line-height:15.5px;letter-spacing:0.2px;transform:scaleX(1.1434);font-weight:700;">Pisači i skeneri</span>
<span class="t" style="left:350.18px;top:924.67px;font-size:11.5px;line-height:15.5px;letter-spacing:0.873px;transform:scaleX(1.09);"> :: </span>
<span class="t" style="left:367.92px;top:924.67px;font-size:11.5px;line-height:15.5px;letter-spacing:0.2px;transform:scaleX(1.1434);font-weight:700;">Ostalo</span>
<span class="t" style="left:809.00px;top:902.57px;font-size:11.5px;line-height:15.5px;letter-spacing:0.2px;transform:scaleX(1.123);font-weight:700;">LG Flatron W2220P</span>
<span class="t" style="left:809.30px;top:915.77px;font-size:11.5px;line-height:15.5px;letter-spacing:0.12px;transform:scaleX(1.0892);">autor:</span>
<span class="t" style="left:848.30px;top:915.77px;font-size:11.5px;line-height:15.5px;letter-spacing:0.2px;transform:scaleX(1.0878);font-weight:700;">Visage</span>
<span class="t" style="left:1047.00px;top:929.07px;font-size:11.5px;line-height:15.5px;letter-spacing:0.12px;transform:scaleX(1.084);">Danas 12:35</span>
<span class="t" style="left:1146.37px;top:915.00px;font-size:13px;line-height:17px;letter-spacing:0px;transform:scaleX(1.145);">3,466</span>
<span class="t" style="left:1198.23px;top:915.00px;font-size:13px;line-height:17px;letter-spacing:0px;transform:scaleX(1.145);">36,938</span>
<span class="t" style="left:51.00px;top:954.75px;font-size:14px;line-height:18px;letter-spacing:0.2px;transform:scaleX(1.0358);font-weight:700;">Problemi</span>
<span class="t" style="left:121.00px;top:956.87px;font-size:11.5px;line-height:15.5px;letter-spacing:0.12px;transform:scaleX(1.0822);">(22 čita)</span>
<span class="t" style="left:51.00px;top:971.67px;font-size:11.5px;line-height:15.5px;letter-spacing:0.2px;transform:scaleX(1.16);font-weight:700;">Hardver</span>
<span class="t" style="left:103.05px;top:971.67px;font-size:11.5px;line-height:15.5px;letter-spacing:0.873px;transform:scaleX(1.09);"> :: </span>
<span class="t" style="left:120.79px;top:971.67px;font-size:11.5px;line-height:15.5px;letter-spacing:0.2px;transform:scaleX(1.16);font-weight:700;">Softver</span>
<span class="t" style="left:809.00px;top:949.57px;font-size:11.5px;line-height:15.5px;letter-spacing:0.2px;transform:scaleX(1.1525);font-weight:700;">Udario grom i spalio ADSL router, mrežni kabel i...</span>
<span class="t" style="left:809.30px;top:962.77px;font-size:11.5px;line-height:15.5px;letter-spacing:0.12px;transform:scaleX(1.0892);">autor:</span>
<span class="t" style="left:848.30px;top:962.77px;font-size:11.5px;line-height:15.5px;letter-spacing:0.2px;transform:scaleX(1.1338);font-weight:700;">Nikkv</span>
<span class="t" style="left:1047.00px;top:976.07px;font-size:11.5px;line-height:15.5px;letter-spacing:0.12px;transform:scaleX(1.084);">Danas 12:40</span>
<span class="t" style="left:1142.23px;top:962.00px;font-size:13px;line-height:17px;letter-spacing:0px;transform:scaleX(1.145);">15,032</span>
<span class="t" style="left:1194.09px;top:962.00px;font-size:13px;line-height:17px;letter-spacing:0px;transform:scaleX(1.145);">108,631</span>
<span class="t" style="left:15.50px;top:263.64px;font-size:12px;line-height:16px;letter-spacing:0.2px;transform:scaleX(1.1779);font-weight:700;color:#fff;">Računala</span>
</div></div>
<div style="left:0;top:0;width:1280px;height:26px;background:linear-gradient(#3d8bf5 0,#0f63ea 3px,#0556e2 7px,#0452dc 16px,#0557e6 21px,#0650d8 24px,#0a3fb8 25px,#2a55b0 26px);"></div>
<svg style="left:2px;top:4px" width="17" height="17" viewBox="0 0 17 17"><circle cx="8.500" cy="8.700" r="7.700" fill="#e66f14"/><path d="M1.200 10.500a7.600 7.600 0 0 0 14.800 0c-2 3.500-5 4.800-7.500 4.800S3 14 1.200 10.500z" fill="#f6b030"/><circle cx="9.600" cy="7.200" r="5.300" fill="#3f6fd0"/><circle cx="10.600" cy="6" r="3" fill="#8ab4ee" opacity=".8"/><path d="M2 5.500c1.500-2.800 4-4.300 6.500-4.300-.8.800-1 1.600-.6 2.400 1.500-.2 3 .3 3.800 1.300-1.500-.2-2.500.3-3 1.200.8.200 1.600.6 2 1.300-1.200 0-2.500.6-3.300 1.500-1 1-2.500 1.300-3.800.6C2.500 8.800 1.800 7 2 5.500z" fill="#ee7e18"/><path d="M13 1.800c1.800 1.200 3 3.200 3.200 5.500-.5-1-1.200-1.700-2-2 .3-1.200-.2-2.500-1.200-3.500z" fill="#f29a20"/></svg>
<div style="left:1211px;top:2px;width:21px;height:21px;border:1px solid #fff;border-radius:3px;background:linear-gradient(135deg,#5a8af0 0,#2a5fe0 45%,#1f4fd0 100%);"></div><div style="left:1216px;top:15px;width:7px;height:3px;background:#fff;"></div>
<div style="left:1234px;top:2px;width:21px;height:21px;border:1px solid #fff;border-radius:3px;background:linear-gradient(135deg,#5a8af0 0,#2a5fe0 45%,#1f4fd0 100%);"></div><div style="left:1242px;top:7px;width:8px;height:7px;border:1px solid #fff;border-top-width:2px;"></div><div style="left:1239px;top:11px;width:8px;height:7px;border:1px solid #fff;border-top-width:2px;background:#2a5fe0;"></div>
<div style="left:1257px;top:2px;width:21px;height:21px;border:1px solid #fff;border-radius:3px;background:linear-gradient(135deg,#ee8f72 0,#d9492a 50%,#c4381c 100%);"></div><svg style="left:1261px;top:6px" width="13" height="13" viewBox="0 0 13 13"><path d="M1.200 1.500L11.800 11.800M11.800 1.500L1.200 11.800" stroke="#fff" stroke-width="2"/></svg>
<div style="left:0;top:26px;width:1280px;height:21px;background:#efeee5;"></div>
<div style="left:0;top:46px;width:1280px;height:1px;background:#cdcbbd;"></div>
<div style="left:0;top:47px;width:1280px;height:38px;background:linear-gradient(#f1f0e7 0,#edebe0 40%,#eae8db 100%);"></div>
<div style="left:0;top:47px;width:1280px;height:1px;background:#fbfaf5;"></div>
<div style="left:0;top:84px;width:1280px;height:1px;background:#d6d2bf;"></div>
<div style="left:28px;top:52px;width:52px;height:27px;border-radius:0 9px 9px 0;background:linear-gradient(#d9d9d6 0,#e1e1de 30%,#dcdcd9 70%,#e6e6e2 100%);border:1px solid #c4c4c0;border-top-color:#a9a9a5;border-bottom-color:#d8d8d4;"></div>
<div style="left:38px;top:55px;width:25px;height:22px;background:linear-gradient(#cfcfcd,#c2c2c0 60%,#cacac8);border-radius:0 3px 3px 0;box-shadow:inset 0 1px 1px #b4b4b2;"></div>
<svg style="left:47px;top:60px" width="10" height="12" viewBox="0 0 10 12"><path d="M2.500 1.500L7.500 6L2.500 10.500" stroke="#f2f2f0" stroke-width="2.300" fill="none" stroke-linecap="round" stroke-linejoin="round"/></svg>
<svg style="left:68px;top:65px" width="7" height="4" viewBox="0 0 7 4"><path d="M0 0H7L3.500 3.700z" fill="#0a0a0a"/></svg>
<div style="left:3px;top:47px;width:38px;height:38px;border-radius:19px;background:radial-gradient(circle,#e2e2dc 60%,rgba(230,230,224,0) 72%);"></div>
<div style="left:6px;top:50px;width:33px;height:32px;border-radius:16.500px/16px;background:linear-gradient(#7aae74 0,#5c9a57 25%,#4a8c46 49%,#1e861e 51%,#2f9a2c 78%,#58b552 100%);border:1px solid #2d6a2b;box-shadow:inset 0 0 2px 1px rgba(20,80,20,.55);"></div>
<svg style="left:14px;top:57px" width="14" height="18" viewBox="0 0 14 18"><path d="M10.200 3L3.800 9L10.200 15" stroke="#f4fbf2" stroke-width="2.600" fill="none" stroke-linecap="square" stroke-linejoin="miter"/></svg>
<svg style="left:91px;top:56px" width="19" height="19" viewBox="0 0 19 19"><path d="M14.600 12.600A6.100 6.100 0 1 1 12.600 4.600" stroke="#1c5fca" stroke-width="4" fill="none"/><path d="M14.600 12.600A6.100 6.100 0 1 1 12.600 4.600" stroke="#3d86e6" stroke-width="1.400" fill="none" opacity=".55"/><path d="M9.500 7.800L17.200 1.300V9.200z" fill="#1c5fca"/></svg>
<svg style="left:127px;top:57px" width="18" height="18" viewBox="0 0 18 18"><path d="M2.600 2.600L15.400 15.400M15.400 2.600L2.600 15.400" stroke="#b7b5ae" stroke-width="3.800" stroke-linecap="round"/></svg>
<svg style="left:162px;top:56px" width="21" height="19" viewBox="0 0 21 19"><path d="M3.800 9.500V17.500H17V9.500L10.400 3.500z" fill="#eaf6fb" stroke="#5f88ba" stroke-width="1"/><path d="M2 9.600L10.400 2.900L18.800 9.600" stroke="#f2c02c" stroke-width="3.600" fill="none" stroke-linejoin="round" stroke-linecap="round"/><path d="M3 8.800L10.400 2.900L17.800 8.800" stroke="#f9dc6a" stroke-width="1.200" fill="none" stroke-linejoin="round" stroke-linecap="round"/><rect x="8.400" y="10.700" width="3.800" height="6.500" fill="#9a4a28"/><rect x="9.600" y="12" width="1.300" height="1.600" fill="#e8a878"/></svg>
<div style="left:194px;top:55px;width:820px;height:22px;background:#fff;border:1px solid #a9a693;border-top-color:#8e8b78;border-radius:7px 0 0 7px;"></div>
<div style="left:195px;top:56px;width:26px;height:20px;background:linear-gradient(#f7f6ef,#e9e6d8);border-radius:6px 0 0 6px;border-right:1px solid #d4d1c2;"></div>
<svg style="left:200px;top:58px" width="17" height="17" viewBox="0 0 17 17"><rect x="0" y="1" width="13.600" height="11.800" rx="1.200" fill="#2a2a3a"/><rect x=".5" y="1.300" width="12.600" height="2.600" fill="#35307a"/><rect x=".5" y="3.800" width="12.600" height="5.600" fill="#4a4420"/><rect x=".5" y="9.400" width="12.600" height="3" fill="#1f4a80"/><path d="M2 10.200V4.300h3.500v3.900H3.400v2zM3.400 5.400v1.700h.9V5.400zM7 4.300h4.500v1.300H8.500v1.500h3v1.300H7z" fill="#ecc550"/><path d="M12.500 9l1.100 1.300 1.700-.3-.3 1.700 1.300 1.100-1.500.8.100 1.700-1.700-.4-1 1.400-1-1.400-1.700.4.100-1.700-1.500-.8 1.300-1.100-.3-1.700 1.700.3z" fill="#3a70aa"/><circle cx="12.400" cy="12.600" r="1.600" fill="#6a9fd0"/></svg>
<svg style="left:957px;top:58px" width="16" height="16" viewBox="0 0 16 16"><rect width="16" height="16" rx="2.500" fill="#e8923a"/><rect x=".5" y=".5" width="15" height="15" rx="2" fill="none" stroke="#f6c594" stroke-width="1"/><circle cx="4.300" cy="11.700" r="1.500" fill="#fff"/><path d="M3 7.200a5.800 5.800 0 0 1 5.800 5.800M3 3.600a9.400 9.400 0 0 1 9.400 9.400" stroke="#fff" stroke-width="1.700" fill="none"/></svg>
<svg style="left:976px;top:57px" width="18" height="18" viewBox="0 0 18 18"><path d="M9 1.600l2.250 4.900 5.300.6-3.950 3.600 1.100 5.250L9 13.300l-4.700 2.650 1.100-5.250L1.450 7.100l5.300-.6z" fill="#fdfdfd" stroke="#9a9a9a" stroke-width="1.200" stroke-linejoin="round"/></svg>
<svg style="left:1002px;top:64px" width="6" height="3" viewBox="0 0 6 3"><path d="M0 0H6L3 3z" fill="#111"/></svg>
<div style="left:1022px;top:55px;width:251px;height:22px;background:#fff;border:1px solid #a9a693;border-top-color:#8e8b78;"></div>
<div style="left:1023px;top:56px;width:31px;height:20px;background:linear-gradient(#f4f3ec,#e6e4d8);"></div>
<svg style="left:1026px;top:58px" width="17" height="17" viewBox="0 0 17 17"><path d="M9.500 .3H15a1.500 1.500 0 0 1 1.500 1.500V6H9.500z" fill="#d9261c"/><path d="M7.600 6H16.500V14.500a1.500 1.500 0 0 1-1.500 1.500H10.500V12.500H7.600z" fill="#1f9a3c"/><ellipse cx="4.300" cy="3.400" rx="2.500" ry="2.900" fill="#2a5bd0"/><path d="M.3 6l4.700 2.300L.3 10.700z" fill="#2a5bd0"/><ellipse cx="4.500" cy="13.300" rx="3.900" ry="2.700" fill="#f0bb22"/></svg>
<svg style="left:1045px;top:65px" width="6" height="3" viewBox="0 0 6 3"><path d="M0 0H6L3 3z" fill="#111"/></svg>
<svg style="left:1253px;top:57px" width="18" height="18" viewBox="0 0 18 18"><path d="M2 16.500l6-6.500" stroke="#8a5a3a" stroke-width="2.600" stroke-linecap="round"/><circle cx="11.300" cy="6.300" r="4.600" fill="#dff0fb" stroke="#7aaede" stroke-width="1.600"/></svg>
<div style="left:0;top:85px;width:1280px;height:27px;background:linear-gradient(#efede2 0,#ebe9dc 60%,#e9e7d9 100%);"></div>
<div style="left:0;top:85px;width:1280px;height:1px;background:#faf9f3;"></div>
<svg style="left:3px;top:90px" width="17" height="17" viewBox="0 0 17 17"><path d="M9.500 .3H15a1.500 1.500 0 0 1 1.500 1.500V6H9.500z" fill="#d9261c"/><path d="M7.600 6H16.500V14.500a1.500 1.500 0 0 1-1.500 1.500H10.500V12.500H7.600z" fill="#1f9a3c"/><ellipse cx="4.300" cy="3.400" rx="2.500" ry="2.900" fill="#2a5bd0"/><path d="M.3 6l4.700 2.300L.3 10.700z" fill="#2a5bd0"/><ellipse cx="4.500" cy="13.300" rx="3.900" ry="2.700" fill="#f0bb22"/></svg>
<div style="left:64px;top:91px;width:14px;height:14px;background:linear-gradient(#4a66a8,#3b5998);"></div>
<svg style="left:64px;top:91px" width="14" height="14" viewBox="0 0 14 14"><path d="M8.300 14V8.200h-1.600V6.200h1.600V4.800c0-1.700 1-2.600 2.500-2.600.7 0 1.300.05 1.500.08v1.800h-1c-.8 0-1 .4-1 .95v1.170h2l-.3 2h-1.700V14z" fill="#fff"/></svg>
<div style="left:0;top:111px;width:1280px;height:28px;background:linear-gradient(#e9e6d6 0,#d3d0bd 3px,#d6d3c1 4px,#dbd8c7 100%);"></div>
<div style="left:0;top:136px;width:1280px;height:1px;background:#a9a692;"></div>
<div style="left:0;top:137px;width:1280px;height:2px;background:linear-gradient(#f6f4ea,#ebe8da);"></div>
<div style="left:3px;top:114px;width:205px;height:22px;background:linear-gradient(#e6e3d2,#d9d6c4);border:1px solid #bdbaa6;border-bottom:none;border-radius:3px 3px 0 0;box-shadow:inset 1px 1px 0 #efecde;"></div>
<div style="left:186px;top:119px;width:13px;height:13px;border-radius:2px;background:#e0ddd0;border:1px solid #c8c5b6;"></div>
<svg style="left:189px;top:122px" width="7" height="7" viewBox="0 0 7 7"><path d="M1 1L6 6M6 1L1 6" stroke="#f1efe6" stroke-width="1.600"/></svg>
<svg style="left:12px;top:118px" width="18" height="15" viewBox="0 0 18 15"><path d="M3.300 13.500V7.200c0-1.800 1.300-2.900 3-2.900 1.100 0 2 .5 2.500 1.300.6-.8 1.500-1.300 2.600-1.300 1.800 0 3 1.100 3 2.900v6.300h-2.400V7.500c0-.7-.4-1.100-1-1.100s-1 .4-1 1.100v6H7.600v-6c0-.7-.4-1.100-1-1.100s-1 .4-1 1.100v6z" fill="#eda024"/><path d="M.8 2.800L6 .6l4.200 2.200L5.600 5z" fill="#3a3834"/><path d="M2.800 4v2.200c1.500.9 3.500.9 5.200 0V4L5.600 5z" fill="#4a4844"/><path d="M1.400 3.200V9" stroke="#3a3834" stroke-width=".9"/></svg>
<div style="left:208px;top:113px;width:205px;height:26px;background:linear-gradient(#fcfbf6,#f3f1e6);border:1px solid #a9a692;border-bottom:none;border-radius:4px 4px 0 0;"></div>
<div style="left:391px;top:119px;width:14px;height:14px;border-radius:2px;background:linear-gradient(#e8605a,#c62d28);border:1px solid #b4433c;"></div>
<svg style="left:394px;top:122px" width="8" height="8" viewBox="0 0 8 8"><path d="M1 1L7 7M7 1L1 7" stroke="#fff" stroke-width="1.800"/></svg>
<svg style="left:217px;top:119px" width="17" height="17" viewBox="0 0 17 17"><rect x="0" y="1" width="13.600" height="11.800" rx="1.200" fill="#2a2a3a"/><rect x=".5" y="1.300" width="12.600" height="2.600" fill="#35307a"/><rect x=".5" y="3.800" width="12.600" height="5.600" fill="#4a4420"/><rect x=".5" y="9.400" width="12.600" height="3" fill="#1f4a80"/><path d="M2 10.200V4.300h3.500v3.900H3.400v2zM3.400 5.400v1.700h.9V5.400zM7 4.300h4.500v1.300H8.500v1.500h3v1.300H7z" fill="#ecc550"/><path d="M12.500 9l1.100 1.300 1.700-.3-.3 1.700 1.300 1.100-1.500.8.100 1.700-1.700-.4-1 1.400-1-1.400-1.700.4.100-1.700-1.500-.8 1.300-1.100-.3-1.700 1.700.3z" fill="#3a70aa"/><circle cx="12.400" cy="12.600" r="1.600" fill="#6a9fd0"/></svg>
<div style="left:413px;top:114px;width:205px;height:22px;background:linear-gradient(#e6e3d2,#d9d6c4);border:1px solid #bdbaa6;border-bottom:none;border-radius:3px 3px 0 0;box-shadow:inset 1px 1px 0 #efecde;"></div>
<div style="left:596px;top:119px;width:13px;height:13px;border-radius:2px;background:#e0ddd0;border:1px solid #c8c5b6;"></div>
<svg style="left:599px;top:122px" width="7" height="7" viewBox="0 0 7 7"><path d="M1 1L6 6M6 1L1 6" stroke="#f1efe6" stroke-width="1.600"/></svg>
<svg style="left:422px;top:119px" width="17" height="17" viewBox="0 0 17 17"><rect x="0" y="1" width="13.600" height="11.800" rx="1.200" fill="#2a2a3a"/><rect x=".5" y="1.300" width="12.600" height="2.600" fill="#35307a"/><rect x=".5" y="3.800" width="12.600" height="5.600" fill="#4a4420"/><rect x=".5" y="9.400" width="12.600" height="3" fill="#1f4a80"/><path d="M2 10.200V4.300h3.500v3.900H3.400v2zM3.400 5.400v1.700h.9V5.400zM7 4.300h4.500v1.300H8.500v1.500h3v1.300H7z" fill="#ecc550"/><path d="M12.500 9l1.100 1.300 1.700-.3-.3 1.700 1.300 1.100-1.500.8.100 1.700-1.700-.4-1 1.400-1-1.400-1.700.4.100-1.700-1.500-.8 1.300-1.100-.3-1.700 1.700.3z" fill="#3a70aa"/><circle cx="12.400" cy="12.600" r="1.600" fill="#6a9fd0"/></svg>
<div style="left:618px;top:114px;width:205px;height:22px;background:linear-gradient(#e6e3d2,#d9d6c4);border:1px solid #bdbaa6;border-bottom:none;border-radius:3px 3px 0 0;box-shadow:inset 1px 1px 0 #efecde;"></div>
<div style="left:801px;top:119px;width:13px;height:13px;border-radius:2px;background:#e0ddd0;border:1px solid #c8c5b6;"></div>
<svg style="left:804px;top:122px" width="7" height="7" viewBox="0 0 7 7"><path d="M1 1L6 6M6 1L1 6" stroke="#f1efe6" stroke-width="1.600"/></svg>
<svg style="left:627px;top:119px" width="17" height="17" viewBox="0 0 17 17"><rect x="0" y="1" width="13.600" height="11.800" rx="1.200" fill="#2a2a3a"/><rect x=".5" y="1.300" width="12.600" height="2.600" fill="#35307a"/><rect x=".5" y="3.800" width="12.600" height="5.600" fill="#4a4420"/><rect x=".5" y="9.400" width="12.600" height="3" fill="#1f4a80"/><path d="M2 10.200V4.300h3.500v3.900H3.400v2zM3.400 5.400v1.700h.9V5.400zM7 4.300h4.500v1.300H8.500v1.500h3v1.300H7z" fill="#ecc550"/><path d="M12.500 9l1.100 1.300 1.700-.3-.3 1.700 1.300 1.100-1.500.8.100 1.700-1.700-.4-1 1.400-1-1.400-1.700.4.100-1.700-1.500-.8 1.300-1.100-.3-1.700 1.700.3z" fill="#3a70aa"/><circle cx="12.400" cy="12.600" r="1.600" fill="#6a9fd0"/></svg>
<div style="left:823px;top:114px;width:205px;height:22px;background:linear-gradient(#e6e3d2,#d9d6c4);border:1px solid #bdbaa6;border-bottom:none;border-radius:3px 3px 0 0;box-shadow:inset 1px 1px 0 #efecde;"></div>
<div style="left:1006px;top:119px;width:13px;height:13px;border-radius:2px;background:#e0ddd0;border:1px solid #c8c5b6;"></div>
<svg style="left:1009px;top:122px" width="7" height="7" viewBox="0 0 7 7"><path d="M1 1L6 6M6 1L1 6" stroke="#f1efe6" stroke-width="1.600"/></svg>
<svg style="left:832px;top:119px" width="17" height="17" viewBox="0 0 17 17"><rect x="0" y="1" width="13.600" height="11.800" rx="1.200" fill="#2a2a3a"/><rect x=".5" y="1.300" width="12.600" height="2.600" fill="#35307a"/><rect x=".5" y="3.800" width="12.600" height="5.600" fill="#4a4420"/><rect x=".5" y="9.400" width="12.600" height="3" fill="#1f4a80"/><path d="M2 10.200V4.300h3.500v3.900H3.400v2zM3.400 5.400v1.700h.9V5.400zM7 4.300h4.500v1.300H8.500v1.500h3v1.300H7z" fill="#ecc550"/><path d="M12.500 9l1.100 1.300 1.700-.3-.3 1.700 1.300 1.100-1.500.8.100 1.700-1.700-.4-1 1.400-1-1.400-1.700.4.100-1.700-1.500-.8 1.300-1.100-.3-1.700 1.700.3z" fill="#3a70aa"/><circle cx="12.400" cy="12.600" r="1.600" fill="#6a9fd0"/></svg>
<div style="left:1028px;top:114px;width:205px;height:22px;background:linear-gradient(#e6e3d2,#d9d6c4);border:1px solid #bdbaa6;border-bottom:none;border-radius:3px 3px 0 0;box-shadow:inset 1px 1px 0 #efecde;"></div>
<div style="left:1211px;top:119px;width:13px;height:13px;border-radius:2px;background:#e0ddd0;border:1px solid #c8c5b6;"></div>
<svg style="left:1214px;top:122px" width="7" height="7" viewBox="0 0 7 7"><path d="M1 1L6 6M6 1L1 6" stroke="#f1efe6" stroke-width="1.600"/></svg>
<svg style="left:1037px;top:119px" width="17" height="17" viewBox="0 0 17 17"><rect x="0" y="1" width="13.600" height="11.800" rx="1.200" fill="#2a2a3a"/><rect x=".5" y="1.300" width="12.600" height="2.600" fill="#35307a"/><rect x=".5" y="3.800" width="12.600" height="5.600" fill="#4a4420"/><rect x=".5" y="9.400" width="12.600" height="3" fill="#1f4a80"/><path d="M2 10.200V4.300h3.500v3.900H3.400v2zM3.400 5.400v1.700h.9V5.400zM7 4.300h4.500v1.300H8.500v1.500h3v1.300H7z" fill="#ecc550"/><path d="M12.500 9l1.100 1.300 1.700-.3-.3 1.700 1.300 1.100-1.500.8.100 1.700-1.700-.4-1 1.400-1-1.400-1.700.4.100-1.700-1.500-.8 1.300-1.100-.3-1.700 1.700.3z" fill="#3a70aa"/><circle cx="12.400" cy="12.600" r="1.600" fill="#6a9fd0"/></svg>
<div style="left:1233px;top:114px;width:30px;height:22px;background:linear-gradient(#e6e3d2,#d9d6c4);border:1px solid #bdbaa6;border-bottom:none;box-shadow:inset 1px 1px 0 #efecde;"></div>
<svg style="left:1244px;top:121px" width="9" height="9" viewBox="0 0 9 9"><path d="M4.500 .5V8.500M.5 4.500H8.500" stroke="#918f82" stroke-width="1.500"/></svg>
<div style="left:1264px;top:114px;width:17px;height:22px;background:linear-gradient(#e6e3d2,#d9d6c4);border:1px solid #bdbaa6;border-bottom:none;box-shadow:inset 1px 1px 0 #efecde;"></div>
<svg style="left:1269px;top:124px" width="7" height="4" viewBox="0 0 7 4"><path d="M0 0H7V1H5.500L3.500 3.500L1.500 1H0z" fill="#8a887c"/></svg>
<div style="left:0;top:972px;width:1280px;height:22px;background:#ece9d8;border-top:1px solid #b8b5a2;"></div>
<div style="left:0;top:973px;width:1280px;height:1px;background:#faf9f3;"></div>
<div style="left:0;top:994px;width:1280px;height:30px;background:linear-gradient(#3168d5 0,#4993e6 2px,#2b71e0 4px,#245edc 9px,#2663e0 22px,#1f50c0 28px,#1941a5 30px);"></div>
<div style="left:0;top:994px;width:97px;height:30px;border-radius:0 9px 11px 0/0 14px 16px 0;background:linear-gradient(#3f8f3f 0,#6ab86a 2px,#46a546 5px,#3a9b3a 11px,#3b9d3b 21px,#2e842e 27px,#226a22 30px);box-shadow:2px 0 3px rgba(0,0,50,.5),inset -6px 0 6px -3px rgba(20,80,20,.5);"></div>
<svg style="left:10px;top:998px" width="22" height="22" viewBox="0 0 18.500 18.500"><path d="M2 4.500c2.500-1.500 4.500-1.200 6.500 0l-1.300 4.800c-2-1.200-4-1.400-6.500 0z" fill="#e8512c"/><path d="M9.800 5c2 1.200 4.200 1.300 6.600 0l-1.400 4.800c-2.300 1.300-4.500 1.200-6.500 0z" fill="#7ec242"/><path d="M.3 10.800c2.400-1.400 4.500-1.300 6.500 0l-1.300 4.700c-2-1.200-4.100-1.300-6.500 0z" fill="#3f8be6"/><path d="M8 11.300c2 1.200 4.300 1.300 6.600 0l-1.400 4.800c-2.300 1.300-4.500 1.200-6.500 0z" fill="#f6c42c"/></svg>
<div style="left:107px;top:997px;width:158px;height:25px;border-radius:3px;background:linear-gradient(#1b49ad,#2156c4 40%,#2259c8);box-shadow:inset 1px 1px 2px #0f2f80;"></div>
<svg style="left:116px;top:1001px" width="17" height="17" viewBox="0 0 17 17"><circle cx="8.500" cy="8.700" r="7.700" fill="#e66f14"/><path d="M1.200 10.500a7.600 7.600 0 0 0 14.800 0c-2 3.500-5 4.800-7.500 4.800S3 14 1.200 10.500z" fill="#f6b030"/><circle cx="9.600" cy="7.200" r="5.300" fill="#3f6fd0"/><circle cx="10.600" cy="6" r="3" fill="#8ab4ee" opacity=".8"/><path d="M2 5.500c1.500-2.800 4-4.300 6.500-4.300-.8.800-1 1.600-.6 2.400 1.500-.2 3 .3 3.800 1.300-1.500-.2-2.500.3-3 1.200.8.200 1.600.6 2 1.300-1.200 0-2.500.6-3.300 1.500-1 1-2.500 1.300-3.800.6C2.500 8.800 1.800 7 2 5.500z" fill="#ee7e18"/><path d="M13 1.800c1.800 1.200 3 3.200 3.200 5.500-.5-1-1.200-1.700-2-2 .3-1.200-.2-2.500-1.200-3.500z" fill="#f29a20"/></svg>
<div style="left:267px;top:997px;width:158px;height:25px;border-radius:3px;background:linear-gradient(#5a9af0 0,#3c82ec 3px,#3a7de8 60%,#3372dc);box-shadow:inset 0 0 0 1px rgba(255,255,255,.15);"></div>
<svg style="left:276px;top:1001px" width="17" height="17" viewBox="0 0 17 17"><rect x="1" y="1" width="15" height="15" rx="1.500" fill="#f4f8f2" stroke="#2f7d3a" stroke-width="1.400"/><path d="M4 4l6 9M10 4L4 13" stroke="#1f7a2e" stroke-width="2.400"/><path d="M11 5h4M11 8h4M11 11h4" stroke="#8fc09a" stroke-width="1"/></svg>
<div style="left:1187px;top:994px;width:93px;height:30px;background:linear-gradient(#1573c8 0,#2aa6f2 2px,#18a0ef 5px,#1290e6 22px,#0f78c8 30px);border-left:1px solid #0c3f9c;box-shadow:inset 1px 0 0 #3fb0f5;"></div>
<div style="left:1178px;top:1000px;width:19px;height:19px;border-radius:10px;background:radial-gradient(circle at 40% 35%,#6ec0fa,#2a86e2 70%,#1c66c8);border:1px solid #9fd2fb;"></div>
<svg style="left:1182px;top:1004px" width="10" height="11" viewBox="0 0 10 11"><path d="M7 1.500L3 5.500L7 9.500" stroke="#fff" stroke-width="2.200" fill="none" stroke-linecap="round" stroke-linejoin="round"/></svg>
<svg style="left:1198px;top:1001px" width="16" height="17" viewBox="0 0 16 17"><path d="M6 .5h9v8c0 4-3 6.500-6 8-1-.5-2-1-3-2z" fill="#8f86c8"/><path d="M9.500 .5v15" stroke="#c8c3ea" stroke-width="1"/><path d="M1 2h7M1 5h7M1 8h7M2 11h6" stroke="#e4e2f4" stroke-width="1.900"/><path d="M1 3.500h7M1 6.500h7M1 9.500h7" stroke="#7f78c0" stroke-width="1.100"/></svg>
<div style="left:1216px;top:1001px;width:16px;height:16px;background:#10109c;border-top:1px solid #f0f0f4;border-left:1px solid #f0f0f4;"></div>
<svg style="left:1217px;top:1002px" width="14" height="14" viewBox="0 0 15 15"><path d="M7.500 1.200L14 13.500H1z" fill="#f6e21c" stroke="#f6e21c" stroke-width="1" stroke-linejoin="round"/><path d="M7.500 5v4.500" stroke="#111" stroke-width="1.800"/><circle cx="7.500" cy="11.600" r="1" fill="#111"/></svg>
<div style="left:1263px;top:139px;width:17px;height:833px;background:linear-gradient(90deg,#f2f1ea 0,#fcfcf9 40%,#fdfdfb 100%);"></div>
<div style="left:1264px;top:140px;width:16px;height:17px;border-radius:2px;background:linear-gradient(90deg,#cddcfb,#bccdf7);border:1px solid #fff;box-shadow:inset 0 0 0 1px #b8c9f2;"></div>
<svg style="left:1267px;top:145px" width="9" height="7" viewBox="0 0 9 7"><path d="M1 5.500L4.500 2L8 5.500" stroke="#4d6185" stroke-width="2" fill="none"/></svg>
<div style="left:1264px;top:955px;width:16px;height:17px;border-radius:2px;background:linear-gradient(90deg,#cddcfb,#bccdf7);border:1px solid #fff;box-shadow:inset 0 0 0 1px #b8c9f2;"></div>
<svg style="left:1267px;top:960px" width="9" height="7" viewBox="0 0 9 7"><path d="M1 1.500L4.500 5L8 1.500" stroke="#4d6185" stroke-width="2" fill="none"/></svg>
<div style="left:1265px;top:333px;width:15px;height:313px;border-radius:2px;background:linear-gradient(90deg,#c9d8fc 0,#c2d3fb 50%,#b9cbf7 100%);border:1px solid #fff;box-shadow:inset 0 0 0 1px #b3c5f0;"></div>
<div style="left:1269px;top:486px;width:7px;height:1px;background:#eef3ff;box-shadow:0 1px 0 #8ea5dd;"></div>
<div style="left:1269px;top:488px;width:7px;height:1px;background:#eef3ff;box-shadow:0 1px 0 #8ea5dd;"></div>
<div style="left:1269px;top:490px;width:7px;height:1px;background:#eef3ff;box-shadow:0 1px 0 #8ea5dd;"></div>
<div style="left:1269px;top:492px;width:7px;height:1px;background:#eef3ff;box-shadow:0 1px 0 #8ea5dd;"></div>
<span class="t" style="left:21.50px;top:5.22px;font-size:12.5px;line-height:16.5px;letter-spacing:0.259px;font-weight:700;color:#fff;text-shadow:1px 1px 0 #0a2a7a;">PC Ekspert Forum - Podupire vBulletin - Mozilla Firefox</span>
<span class="t" style="left:6.50px;top:28.69px;font-size:11px;line-height:15px;letter-spacing:0.065px;"><u style="text-decoration-thickness:1px;text-underline-offset:1px">D</u>atoteka</span>
<span class="t" style="left:66.50px;top:28.69px;font-size:11px;line-height:15px;letter-spacing:0px;transform:scaleX(0.9697);">Ur<u style="text-decoration-thickness:1px;text-underline-offset:1px">e</u>di</span>
<span class="t" style="left:107.50px;top:28.69px;font-size:11px;line-height:15px;letter-spacing:0px;transform:scaleX(0.948);">Po<u style="text-decoration-thickness:1px;text-underline-offset:1px">g</u>led</span>
<span class="t" style="left:155.50px;top:28.69px;font-size:11px;line-height:15px;letter-spacing:0px;transform:scaleX(0.9862);">Povije<u style="text-decoration-thickness:1px;text-underline-offset:1px">s</u>t</span>
<span class="t" style="left:209.50px;top:28.69px;font-size:11px;line-height:15px;letter-spacing:0px;transform:scaleX(0.9587);">Za<u style="text-decoration-thickness:1px;text-underline-offset:1px">b</u>ilješke</span>
<span class="t" style="left:273.00px;top:28.69px;font-size:11px;line-height:15px;letter-spacing:0.02px;">Ala<u style="text-decoration-thickness:1px;text-underline-offset:1px">t</u>i</span>
<span class="t" style="left:309.50px;top:28.69px;font-size:11px;line-height:15px;letter-spacing:0px;transform:scaleX(0.9197);"><u style="text-decoration-thickness:1px;text-underline-offset:1px">P</u>omoć</span>
<span class="t" style="left:223.50px;top:59.19px;font-size:11px;line-height:15px;letter-spacing:0.172px;">http://forum.pcekspert.com/index.php</span>
<span class="t" style="left:1057.00px;top:59.19px;font-size:11px;line-height:15px;letter-spacing:0px;transform:scaleX(0.9159);color:#8a8a8a;">Google</span>
<span class="t" style="left:23.00px;top:91.69px;font-size:11px;line-height:15px;letter-spacing:0px;transform:scaleX(0.9159);">Google</span>
<span class="t" style="left:83.00px;top:91.69px;font-size:11px;line-height:15px;letter-spacing:0px;transform:scaleX(0.9625);">Facebook</span>
<span class="t" style="left:30.50px;top:118.69px;font-size:11px;line-height:15px;letter-spacing:0px;transform:scaleX(0.9542);">E-Learning@FOI</span>
<span class="t" style="left:235.50px;top:118.69px;font-size:11px;line-height:15px;letter-spacing:0.264px;font-weight:700;">PC Ekspert Forum - Podu...</span>
<span class="t" style="left:440.50px;top:118.69px;font-size:11px;line-height:15px;letter-spacing:0.001px;">Upgrade, popravci, debugira...</span>
<span class="t" style="left:645.50px;top:118.69px;font-size:11px;line-height:15px;letter-spacing:0px;transform:scaleX(0.9845);">Kućišta, napajanja, modding i...</span>
<span class="t" style="left:849.50px;top:118.69px;font-size:11px;line-height:15px;letter-spacing:0px;transform:scaleX(0.9548);">MotoGP 2010 - PC Ekspert Fo...</span>
<span class="t" style="left:1054.50px;top:118.69px;font-size:11px;line-height:15px;letter-spacing:0px;transform:scaleX(0.9668);">p: PSU Chiftec 550w, PSU For...</span>
<span class="t" style="left:5.50px;top:975.69px;font-size:11px;line-height:15px;letter-spacing:0px;transform:scaleX(0.9586);">Gotovo</span>
<span class="t" style="left:35.00px;top:995.87px;font-size:20px;line-height:24px;letter-spacing:0px;transform:scaleX(0.8533);font-weight:700;font-style:italic;color:#fff;text-shadow:1px 1px 1px #1a4a1a;">start</span>
<span class="t" style="left:135.50px;top:1002.19px;font-size:11px;line-height:15px;letter-spacing:0px;transform:scaleX(0.9798);color:#fff;">PC Ekspert Forum - P...</span>
<span class="t" style="left:294.50px;top:1002.19px;font-size:11px;line-height:15px;letter-spacing:0px;transform:scaleX(0.9606);color:#fff;">Microsoft Excel - Book1</span>
<span class="t" style="left:1160.00px;top:1002.19px;font-size:11px;line-height:15px;letter-spacing:0px;color:#fff;">HR</span>
<span class="t" style="left:1238.50px;top:1002.19px;font-size:11px;line-height:15px;letter-spacing:0px;transform:scaleX(0.9807);color:#fff;">13:55</span>
</div>
</body></html>
